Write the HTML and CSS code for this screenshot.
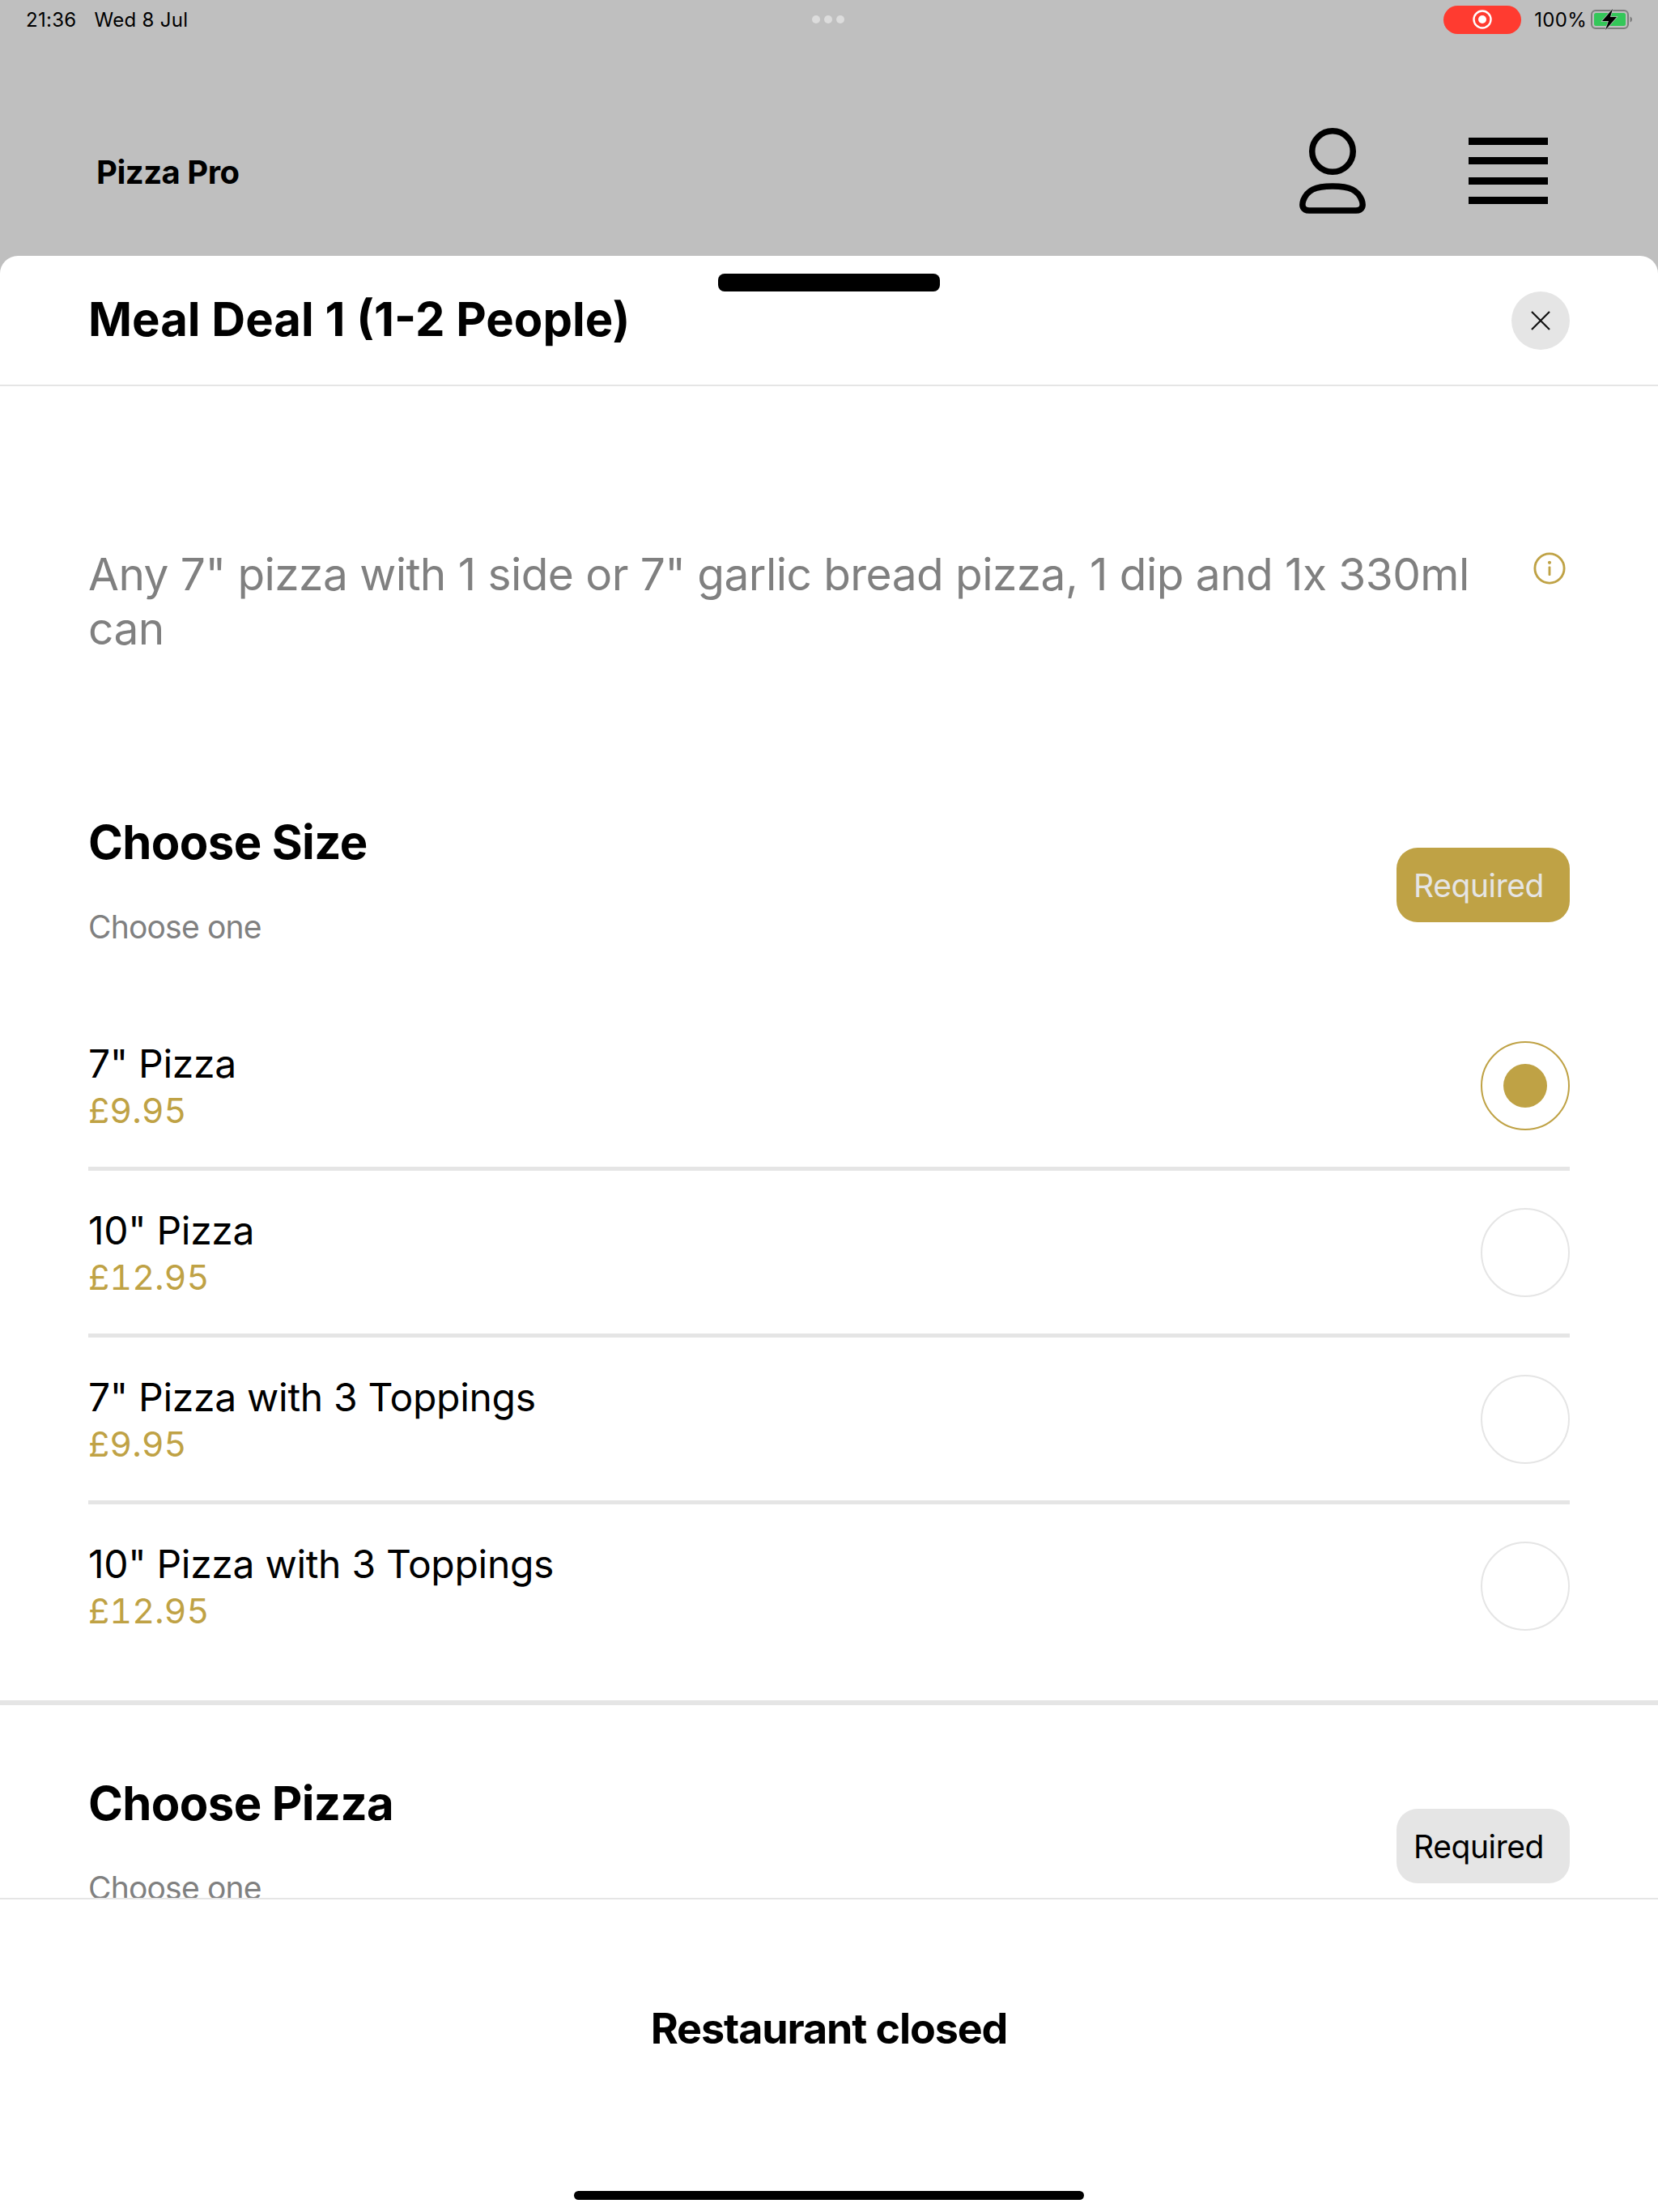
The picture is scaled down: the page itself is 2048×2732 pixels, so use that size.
FILE: index.html
```html
<!DOCTYPE html>
<html>
<head>
<meta charset="UTF-8">
<title>Pizza Pro</title>
<link rel="stylesheet" href="styles.css">
</head>
<body>
<div class="topArea">
	<div class="statusBar">
		<div class="statusLeft">
			<span>21:36</span>
			<span>Wed 8 Jul</span>
		</div>
		<div class="dots"><i></i><i></i><i></i></div>
		<div class="statusRight">
			<div class="recPill">
				<svg width="24" height="24" viewBox="0 0 24 24"><circle cx="12" cy="12" r="10.500" fill="none" stroke="#fff" stroke-width="2.400"/><circle cx="12" cy="12" r="5" fill="#fff"/></svg>
			</div>
			<span class="pct">100%</span>
			<svg class="battery" width="52" height="26" viewBox="0 0 52 26">
				<rect x="1" y="2" width="45" height="22" rx="5" fill="none" stroke="#7d7d7d" stroke-width="2"/>
				<rect x="4" y="5" width="39" height="16" rx="2.500" fill="#34c759"/>
				<path d="M48.500 9.500c2 .8 2.500 2 2.500 3.500s-.5 2.700-2.500 3.500z" fill="#7d7d7d"/>
				<path class="bolt" d="M27 0 14 15h8l-4 11 14-16h-8z"/>
			</svg>
		</div>
	</div>
	<div class="topBar">
		<div class="brand">Pizza Pro</div>
		<div class="topIcons">
			<svg class="userIcon" width="84" height="106" viewBox="0 0 84 106">
				<circle cx="42" cy="29" r="25.250" fill="none" stroke="#000" stroke-width="7.500"/>
				<path d="M42 72C20 72 11 77 6 89c-2.500 7-1 13 7 13h58c8 0 9.500-6 7-13C73 77 64 72 42 72z" fill="none" stroke="#000" stroke-width="7.500"/>
			</svg>
			<div class="burger"><i></i><i></i><i></i><i></i></div>
		</div>
	</div>
</div>

<div class="sheet">
	<div class="handle"></div>
	<div class="sheetHead">
		<h1>Meal Deal 1 (1-2 People)</h1>
		<div class="closeBtn">
			<svg width="24" height="24" viewBox="0 0 24 24"><path d="M1 1 23 23M23 1 1 23" stroke="#111" stroke-width="2.200" fill="none"/></svg>
		</div>
	</div>

	<div class="scroller">
		<div class="descRow">
			<p class="desc">Any 7" pizza with 1 side or 7" garlic bread pizza, 1 dip and 1x 330ml can</p>
			<svg class="infoIcon" width="40" height="40" viewBox="0 0 42 42">
				<circle cx="21" cy="21" r="19" fill="none" stroke="#bfa245" stroke-width="3"/>
				<circle cx="21" cy="13.500" r="2.200" fill="#bfa245"/>
				<rect x="19.500" y="18.500" width="3" height="12" rx="1" fill="#bfa245"/>
			</svg>
		</div>

		<div class="section">
			<div class="sectionHead">
				<div>
					<h2>Choose Size</h2>
					<div class="hint">Choose one</div>
				</div>
				<div class="pill pillGold">Required</div>
			</div>
			<div class="option">
				<div>
					<div class="optName">7" Pizza</div>
					<div class="optPrice">£9.95</div>
				</div>
				<div class="radio radioOn"><i></i></div>
			</div>
			<div class="option">
				<div>
					<div class="optName">10" Pizza</div>
					<div class="optPrice">£12.95</div>
				</div>
				<div class="radio"></div>
			</div>
			<div class="option">
				<div>
					<div class="optName">7" Pizza with 3 Toppings</div>
					<div class="optPrice">£9.95</div>
				</div>
				<div class="radio"></div>
			</div>
			<div class="option optLast">
				<div>
					<div class="optName">10" Pizza with 3 Toppings</div>
					<div class="optPrice">£12.95</div>
				</div>
				<div class="radio"></div>
			</div>
		</div>

		<div class="section sectionNext">
			<div class="sectionHead">
				<div>
					<h2>Choose Pizza</h2>
					<div class="hint">Choose one</div>
				</div>
				<div class="pill">Required</div>
			</div>
		</div>
	</div>

	<div class="footer">Restaurant closed</div>
	<div class="homeBar"></div>
</div>
</body>
</html>
```

FILE: styles.css
```css
* {
	box-sizing: border-box;
}
html, body {
	margin: 0;
	height: 2732px;
	overflow: hidden;
}
body {
	background: #bfbfbf;
	color: #000;
	font-family: Inter, "Liberation Sans", sans-serif;
	display: flex;
	flex-direction: column;
	width: 2048px;
}
.topArea {
	height: 316px;
	flex: none;
}
.statusBar {
	height: 48px;
	padding: 0 31px 0 32px;
	display: flex;
	align-items: center;
	justify-content: space-between;
	font-size: 24px;
	letter-spacing: 0.3px;
	position: relative;
}
.statusLeft {
	display: flex;
	gap: 22px;
}
.dots {
	display: flex;
	gap: 5px;
	position: absolute;
	left: 1003px;
	top: 19px;
}
.dots i {
	width: 10px;
	height: 10px;
	border-radius: 50%;
	background: #dcdcdc;
}
.statusRight {
	display: flex;
	align-items: center;
}
.recPill {
	width: 96px;
	height: 35px;
	border-radius: 18px;
	background: #ff3b30;
	display: flex;
	align-items: center;
	justify-content: center;
	margin-right: 16px;
}
.pct {
	margin-right: 5px;
}
.bolt {
	fill: #000;
	stroke: #bfbfbf;
	stroke-width: 1.5px;
	paint-order: stroke;
}
.topBar {
	height: 268px;
	padding: 58px 136px 0 119px;
	display: flex;
	align-items: center;
	justify-content: space-between;
}
.brand {
	margin-top: 2px;
	font-size: 40px;
	font-weight: 700;
	letter-spacing: -0.5px;
}
.topIcons {
	display: flex;
	align-items: center;
	gap: 126px;
}
.burger {
	width: 98px;
	display: flex;
	flex-direction: column;
	gap: 15.5px;
}
.burger i {
	display: block;
	height: 9px;
	background: #000;
}

.sheet {
	flex: 1;
	min-height: 0;
	background: #fff;
	border-radius: 22px 22px 0 0;
	display: flex;
	flex-direction: column;
	position: relative;
}
.handle {
	position: absolute;
	left: 887px;
	top: 22px;
	width: 274px;
	height: 22px;
	border-radius: 8px;
	background: #000;
}
.sheetHead {
	height: 161px;
	flex: none;
	padding: 0 109px;
	display: flex;
	align-items: center;
	justify-content: space-between;
	border-bottom: 2px solid #e5e5e5;
}
h1 {
	margin: 0 0 3px;
	font-size: 58px;
	font-weight: 700;
	letter-spacing: 0;
}
.closeBtn {
	width: 72px;
	height: 72px;
	border-radius: 50%;
	background: #e5e5e5;
	display: flex;
	align-items: center;
	justify-content: center;
}
.scroller {
	flex: 1;
	min-height: 0;
	overflow: hidden;
	border-bottom: 2px solid #e5e5e5;
}
.descRow {
	padding: 199px 114px 0 109px;
	display: flex;
	align-items: flex-start;
	gap: 60px;
}
.desc {
	margin: 0;
	flex: 1;
	font-size: 55px;
	line-height: 67px;
	color: #808080;
	letter-spacing: -0.55px;
}
.infoIcon {
	flex: none;
	margin-top: 6px;
}
.section {
	padding: 196px 109px 36px;
}
.sectionHead {
	display: flex;
	align-items: flex-start;
	justify-content: space-between;
	margin-bottom: 71px;
}
h2 {
	margin: 0;
	font-size: 58px;
	line-height: 68px;
	font-weight: 700;
	letter-spacing: -0.6px;
}
.hint {
	margin-top: 47px;
	font-size: 39px;
	line-height: 48px;
	letter-spacing: -0.8px;
	color: #808080;
}
.pill {
	width: 214px;
	height: 92px;
	margin-top: 41px;
	padding-left: 21px;
	border-radius: 26px;
	background: #e5e5e5;
	font-size: 39px;
	letter-spacing: -0.4px;
	display: flex;
	align-items: center;
}
.pillGold {
	background: #bfa245;
	color: #e5e5e5;
}
.option {
	height: 206px;
	border-bottom: 5px solid #e5e5e5;
	display: flex;
	align-items: center;
	justify-content: space-between;
}
.optLast {
	border-bottom-color: transparent;
}
.optName {
	font-size: 48px;
	line-height: 60px;
	letter-spacing: -0.3px;
}
.optPrice {
	font-size: 43px;
	line-height: 54px;
	font-variant-numeric: tabular-nums;
	color: #bfa245;
}
.radio {
	width: 110px;
	height: 110px;
	border-radius: 50%;
	border: 2px solid #e5e5e5;
	display: flex;
	align-items: center;
	justify-content: center;
}
.radioOn {
	border-color: #bfa245;
}
.radioOn i {
	width: 54px;
	height: 54px;
	border-radius: 50%;
	background: #bfa245;
}
.sectionNext {
	border-top: 6px solid #e5e5e5;
	padding-top: 87px;
}
.footer {
	height: 386px;
	flex: none;
	padding-bottom: 68px;
	display: flex;
	align-items: center;
	justify-content: center;
	font-size: 52px;
	font-weight: 700;
	letter-spacing: -1.1px;
}
.homeBar {
	position: absolute;
	left: 709px;
	bottom: 15px;
	width: 630px;
	height: 11px;
	border-radius: 6px;
	background: #000;
}
```
